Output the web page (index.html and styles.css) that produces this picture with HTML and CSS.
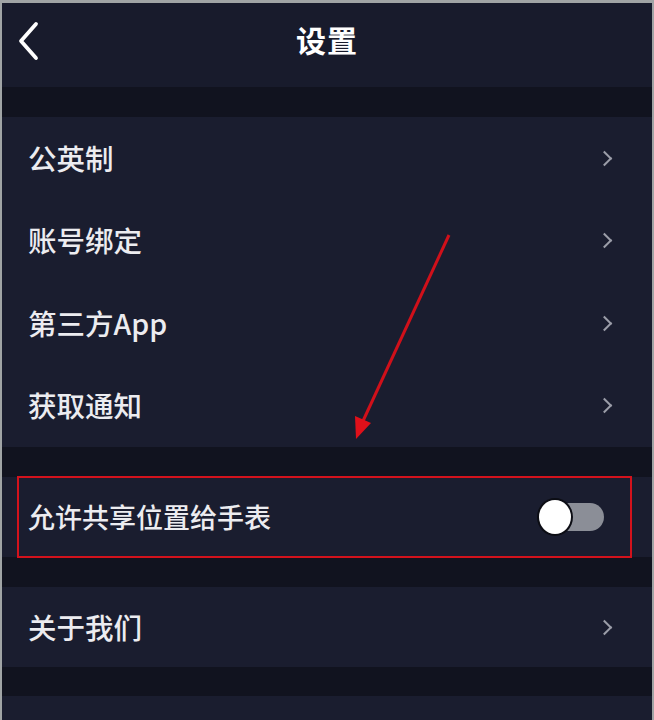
FILE: index.html
```html
<!DOCTYPE html>
<html lang="zh-CN">
<head>
    <meta charset="UTF-8">
    <meta name="viewport" content="width=device-width, initial-scale=1.0">
    <title>设置</title>
    <link rel="stylesheet" href="styles.css">
</head>
<body>
    <div class="phone">
        <header class="top-bar">
            <a class="back" href="#">
                <svg width="24" height="40" viewBox="0 0 24 40"><path d="M20 3 L5 20 L20 37" fill="none" stroke="#fff" stroke-width="3.8" stroke-linecap="round" stroke-linejoin="round"/></svg>
            </a>
            <h1>设置</h1>
        </header>

        <div class="gap"></div>

        <ul class="group">
            <li class="row tall"><span>公英制</span><i class="chevron"></i></li>
            <li class="row tall"><span>账号绑定</span><i class="chevron"></i></li>
            <li class="row tall"><span>第三方App</span><i class="chevron"></i></li>
            <li class="row tall"><span>获取通知</span><i class="chevron"></i></li>
        </ul>

        <div class="gap"></div>

        <ul class="group">
            <li class="row highlighted">
                <span>允许共享位置给手表</span>
                <label class="switch"><span class="knob"></span></label>
            </li>
        </ul>

        <div class="gap"></div>

        <ul class="group">
            <li class="row"><span>关于我们</span><i class="chevron"></i></li>
        </ul>

        <div class="gap short"></div>

        <div class="group rest"></div>

        <svg class="arrow" width="654" height="720" viewBox="0 0 654 720">
            <line x1="449" y1="235" x2="363" y2="421" stroke="#d0101a" stroke-width="3"/>
            <polygon points="356,439 355,416 371,423" fill="#e0101a"/>
        </svg>
    </div>
</body>
</html>
```

FILE: styles.css
```css
body {
    margin: 0;
    padding: 0;
    background-color: #a0a4a5;
    font-family: "Noto Sans CJK SC", "Noto Sans", sans-serif;
    color: #ececf0;
}

.phone {
    position: relative;
    height: 717px;
    margin: 3px 2px 0 2px;
    background-color: #11131f;
    overflow: hidden;
}

.top-bar {
    height: 84px;
    background-color: #181b2c;
    display: flex;
    align-items: center;
    justify-content: center;
    position: relative;
}

.top-bar h1 {
    margin: 0 0 12px 0;
    font-size: 30px;
    font-weight: 700;
    color: #fff;
    letter-spacing: 1px;
}

.back {
    position: absolute;
    left: 14px;
    top: 18px;
    display: block;
    line-height: 0;
}

.gap {
    height: 30px;
}

.gap.short {
    height: 29px;
}

.group {
    list-style: none;
    margin: 0;
    padding: 0;
    background-color: #1a1d2f;
}

.row {
    height: 80px;
    display: flex;
    align-items: center;
    justify-content: space-between;
    padding: 0 40px 0 26px;
    font-size: 28.5px;
    font-weight: 500;
    position: relative;
}

.row.tall {
    height: 82.5px;
}

.row.highlighted {
    font-size: 27px;
}

.row > span {
    margin-top: -2px;
}

.chevron {
    display: block;
    width: 9px;
    height: 9px;
    border-top: 2px solid #9b9da8;
    border-right: 2px solid #9b9da8;
    transform: rotate(45deg);
    margin-right: 2px;
}

.highlighted::after {
    content: "";
    position: absolute;
    left: 15px;
    right: 20px;
    top: -1px;
    bottom: -1px;
    border: 2.5px solid #d3121c;
}

.switch {
    position: relative;
    width: 62px;
    height: 28px;
    border-radius: 14px;
    background-color: #8b8e97;
    margin-right: 8px;
}

.knob {
    position: absolute;
    left: -3px;
    top: -3px;
    width: 32px;
    height: 34px;
    border-radius: 50%;
    background-color: #fff;
    box-shadow: 0 0 0 2px #0c0d14;
}

.rest {
    height: 40px;
}

.arrow {
    position: absolute;
    left: -2px;
    top: -3px;
    pointer-events: none;
}
```
